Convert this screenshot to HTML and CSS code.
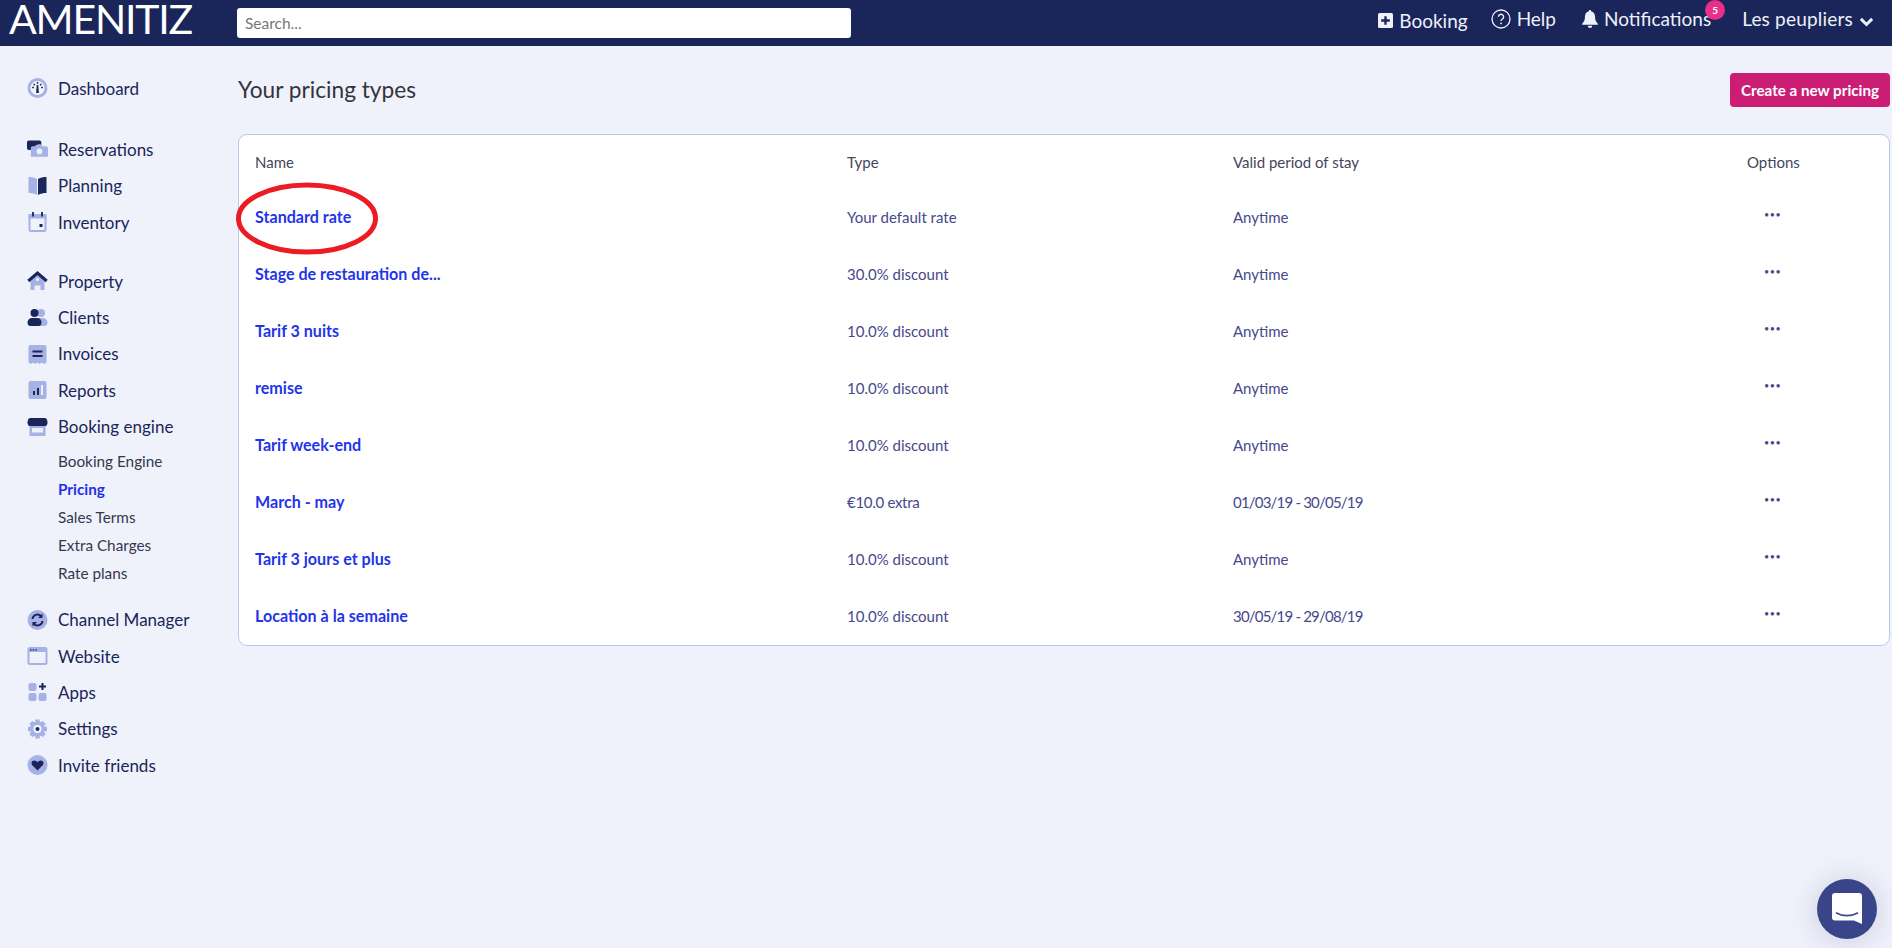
FILE: index.html
```html
<!DOCTYPE html>
<html lang="en">
<head>
<meta charset="utf-8">
<title>Your pricing types</title>
<link rel="stylesheet" href="styles.css">
</head>
<body>
<header class="topbar">
  <div class="logo">AMENITIZ</div>
  <input class="search" type="text" placeholder="Search...">
  <nav class="topnav">
    <a class="top-item booking"><svg class="ti" width="15" height="15" viewBox="0 0 14 14"><rect width="14" height="14" rx="1.5" fill="#eef1fa"/><path d="M7 3v8M3 7h8" stroke="#1a2559" stroke-width="2.2"/></svg>Booking</a>
    <a class="top-item help"><svg class="ti" width="20" height="20" viewBox="0 0 20 20"><circle cx="10" cy="10" r="9" fill="none" stroke="#eef1fa" stroke-width="1.3"/><path d="M7.4 7.8a2.600 2.600 0 1 1 4 2.200c-.9.6-1.400 1-1.400 2" fill="none" stroke="#eef1fa" stroke-width="1.4"/><circle cx="10" cy="14.400" r=".9" fill="#eef1fa"/></svg>Help</a>
    <a class="top-item notif"><svg class="ti" width="16" height="18" viewBox="0 0 14 16"><path d="M7 0c.7 0 1 .5 1 1 2.300.5 3.500 2.400 3.500 4.800 0 3.500.8 4.700 2.500 6.400V13H0v-.8c1.700-1.700 2.500-2.900 2.500-6.400C2.500 3.400 3.700 1.500 6 1c0-.5.300-1 1-1zM5 14h4a2 2 0 0 1-4 0z" fill="#eef1fa"/></svg>Notifications<span class="badge">5</span></a>
    <a class="top-item account">Les peupliers<svg class="chev" width="15" height="10" viewBox="0 0 12 8"><path d="M1.500 1.500 6 6l4.500-4.500" fill="none" stroke="#eef1fa" stroke-width="2.400"/></svg></a>
  </nav>
</header>

<div class="layout">
  <aside class="sidebar">
    <ul class="group first">
      <li class="item"><svg class="ic" viewBox="0 0 20 20"><circle cx="10" cy="10" r="10" fill="#a6b1e6"/><circle cx="10" cy="10" r="7" fill="#f4f6fc"/><path d="M10 4v1.800M4.600 9.500h1.800M13.600 9.500h1.800M6.200 6l1.200 1.200M13.800 6l-1.200 1.200" stroke="#1a2559" stroke-width="1.500"/><path d="M9.200 7h1.600l.6 8H8.600z" fill="#1a2559"/></svg>Dashboard</li>
    </ul>
    <ul class="group second">
      <li class="item"><svg class="ic" viewBox="0 0 22 20"><path d="M2 1h11a2 2 0 0 1 2 2v3H9v5H2a2 2 0 0 1-2-2V3a2 2 0 0 1 2-2z" fill="#1a2559"/><path d="M6 7h4l1-2h4l1 2h4a2 2 0 0 1 2 2v9H4V9a2 2 0 0 1 2-2z" fill="#a6b1e6"/><circle cx="13" cy="12.500" r="3" fill="#eef1fa"/></svg>Reservations</li>
      <li class="item"><svg class="ic" viewBox="0 0 20 20"><path d="M1 1c3 0 6 .5 8.500 2v16C7 17.500 4 17 1 17z" fill="#a6b1e6"/><path d="M19 1c-3 0-6 .5-8.500 2v16c2.500-1.500 5.500-2 8.500-2z" fill="#1a2559"/></svg>Planning</li>
      <li class="item"><svg class="ic" viewBox="0 0 20 20"><rect x="2" y="3" width="16" height="16" rx="1.500" fill="none" stroke="#a6b1e6" stroke-width="2"/><rect x="1" y="2" width="18" height="4.500" fill="#a6b1e6"/><path d="M5.500 0v4.500M14.500 0v4.500" stroke="#1a2559" stroke-width="1.800"/><rect x="12" y="12" width="3" height="3" fill="#1a2559"/></svg>Inventory</li>
    </ul>
    <ul class="group">
      <li class="item"><svg class="ic" viewBox="0 0 20 20"><path d="M3 7h14v12h-4v-4.500H7V19H3z" fill="#a6b1e6"/><path d="M10 3 3 9h14z" fill="#a6b1e6"/><circle cx="10" cy="8.500" r="1.500" fill="#eef1fa"/><path d="M.8 10 10 2l9.200 8" fill="none" stroke="#1a2559" stroke-width="3"/></svg>Property</li>
      <li class="item"><svg class="ic" viewBox="0 0 20 20"><circle cx="13.500" cy="5" r="4" fill="#a6b1e6"/><path d="M11 10h4c3 0 5 2 5 4.500 0 2-1 3.500-3 3.500h-8z" fill="#a6b1e6"/><circle cx="7" cy="5" r="4" fill="#1a2559"/><path d="M4.500 10h5c3 0 4.500 2 4.500 4.500 0 2-1 3.500-3 3.500H3c-2 0-3-1.500-3-3.500C0 12 2 10 4.500 10z" fill="#1a2559"/></svg>Clients</li>
      <li class="item"><svg class="ic" viewBox="0 0 20 20"><path d="M3 1h14a2 2 0 0 1 2 2v15.500l-2.500 1.500-2.200-1.500-2.200 1.500-2.100-1.500-2.200 1.500-2.200-1.500L3.500 20 1 18.500V3a2 2 0 0 1 2-2z" fill="#a6b1e6"/><path d="M5 7.500h10M5 12h10" stroke="#1a2559" stroke-width="2"/></svg>Invoices</li>
      <li class="item"><svg class="ic" viewBox="0 0 20 20"><rect x="1" y="1" width="18" height="18" rx="2" fill="#a6b1e6"/><path d="M5.500 11h2v4h-2zM9.500 8h2v7h-2z" fill="#1a2559"/><path d="M13.500 5h2v10h-2z" fill="#eef1fa"/></svg>Reports</li>
      <li class="item"><svg class="ic" viewBox="0 0 20 20"><path d="M2 8h16v11H2z" fill="#a6b1e6"/><rect x="4.500" y="11" width="11" height="4.500" fill="#eef1fa"/><path d="M3 1h14c2 0 3 2 3 4.500C20 7.500 19 9 18 9H2C1 9 0 7.500 0 5.500 0 3 1 1 3 1z" fill="#1a2559"/></svg>Booking engine</li>
    </ul>
    <ul class="subgroup">
      <li class="sub">Booking Engine</li>
      <li class="sub active">Pricing</li>
      <li class="sub">Sales Terms</li>
      <li class="sub">Extra Charges</li>
      <li class="sub">Rate plans</li>
    </ul>
    <ul class="group tight">
      <li class="item"><svg class="ic" viewBox="0 0 20 20"><circle cx="10" cy="10" r="10" fill="#a6b1e6"/><path d="M5 9a5 5 0 0 1 8.500-3M15 11a5 5 0 0 1-8.500 3" fill="none" stroke="#1a2559" stroke-width="2"/><path d="M15 3.500V8h-4.500zM5 16.500V12h4.500z" fill="#1a2559"/></svg>Channel Manager</li>
      <li class="item"><svg class="ic" viewBox="0 0 20 20"><rect x="1" y="2" width="18" height="16" rx="1.500" fill="none" stroke="#a6b1e6" stroke-width="2"/><rect x="1" y="2" width="18" height="4" fill="#a6b1e6"/><path d="M2.500 3.200h1.500v1.400H2.500zM5.200 3.200h1.500v1.400H5.200zM7.900 3.200h1.500v1.400H7.900z" fill="#1a2559"/></svg>Website</li>
      <li class="item"><svg class="ic" viewBox="0 0 20 20"><rect x="1" y="1" width="8" height="8" rx="2" fill="#a6b1e6"/><rect x="1" y="11" width="8" height="8" rx="2" fill="#a6b1e6"/><rect x="11" y="11" width="8" height="8" rx="2" fill="#a6b1e6"/><path d="M15 1v7M11.500 4.500h7" stroke="#1a2559" stroke-width="2"/></svg>Apps</li>
      <li class="item"><svg class="ic" viewBox="0 0 20 20"><path d="M10 10V.5M10 10l6.700-6.700M10 10h9.500M10 10l6.700 6.700M10 10v9.500M10 10l-6.700 6.700M10 10H.5M10 10 3.300 3.300" stroke="#a6b1e6" stroke-width="4.500"/><circle cx="10" cy="10" r="7.500" fill="#a6b1e6"/><circle cx="10" cy="10" r="4" fill="#f4f6fc"/><circle cx="10" cy="10" r="2" fill="#1a2559"/></svg>Settings</li>
      <li class="item"><svg class="ic" viewBox="0 0 20 20"><circle cx="10" cy="10" r="10" fill="#a6b1e6"/><path d="M10 15.500 4.800 10.200C3 8.300 4.300 5.500 6.800 5.500c1.300 0 2.500.7 3.200 1.800.7-1.100 1.900-1.800 3.200-1.800 2.500 0 3.800 2.800 2 4.700z" fill="#1a2559"/></svg>Invite friends</li>
    </ul>
  </aside>

  <main class="content">
    <div class="head">
      <h1 class="title">Your pricing types</h1>
      <a class="btn">Create a new pricing</a>
    </div>
    <section class="card">
      <table class="table">
        <thead>
          <tr><th class="c1">Name</th><th class="c2">Type</th><th class="c3">Valid period of stay</th><th class="c4">Options</th></tr>
        </thead>
        <tbody>
          <tr><td><a class="name">Standard rate</a></td><td>Your default rate</td><td>Anytime</td><td class="dots"><span>•••</span></td></tr>
          <tr><td><a class="name">Stage de restauration de...</a></td><td>30.0% discount</td><td>Anytime</td><td class="dots"><span>•••</span></td></tr>
          <tr><td><a class="name">Tarif 3 nuits</a></td><td>10.0% discount</td><td>Anytime</td><td class="dots"><span>•••</span></td></tr>
          <tr><td><a class="name">remise</a></td><td>10.0% discount</td><td>Anytime</td><td class="dots"><span>•••</span></td></tr>
          <tr><td><a class="name">Tarif week-end</a></td><td>10.0% discount</td><td>Anytime</td><td class="dots"><span>•••</span></td></tr>
          <tr><td><a class="name">March - may</a></td><td class="num">€10.0 extra</td><td class="num">01/03/19 - 30/05/19</td><td class="dots"><span>•••</span></td></tr>
          <tr><td><a class="name">Tarif 3 jours et plus</a></td><td>10.0% discount</td><td>Anytime</td><td class="dots"><span>•••</span></td></tr>
          <tr><td><a class="name">Location à la semaine</a></td><td>10.0% discount</td><td class="num">30/05/19 - 29/08/19</td><td class="dots"><span>•••</span></td></tr>
        </tbody>
      </table>
      <svg class="circle" width="145" height="75" viewBox="0 0 145 75"><ellipse cx="72" cy="37.500" rx="68.500" ry="33.500" fill="none" stroke="#ed1c24" stroke-width="5"/></svg>
    </section>
  </main>
</div>

<div class="chat"><svg width="30" height="32" viewBox="0 0 30 32"><path d="M3 0h24a3 3 0 0 1 3 3v28l-8-3.500H3a3 3 0 0 1-3-3V3a3 3 0 0 1 3-3z" fill="#fff"/><path d="M4.500 20c6 3.500 15 3.500 21 0" fill="none" stroke="#3a4589" stroke-width="1.600" stroke-linecap="round"/></svg></div>
</body>
</html>
```
FILE: styles.css
```css
* { box-sizing: border-box; }
html, body { margin: 0; padding: 0; }
body {
  width: 1892px;
  height: 948px;
  overflow: hidden;
  background: #eff2fb;
  font-family: "Lato", "Noto Sans", sans-serif;
  color: #1a2559;
}
ul { list-style: none; margin: 0; padding: 0; }

.topbar {
  height: 46px;
  background: #1a2559;
  display: flex;
  align-items: center;
  color: #eef1fa;
}
.logo {
  width: 237px;
  padding-left: 9px;
  font-size: 41px;
  font-weight: 400;
  line-height: 38px;
  height: 46px;
  letter-spacing: -1.200px;
  color: #fff;
  font-family: "Lato", sans-serif;
}
.search {
  width: 614px;
  height: 30px;
  border: 0;
  border-radius: 3px;
  background: #fff;
  padding: 0 8px;
  font: 15.500px "Lato", sans-serif;
}
.search::placeholder { color: #777; opacity: 1; }
.topnav {
  margin-left: auto;
  display: flex;
  align-items: center;
  height: 46px;
  padding: 0 18px 9px 0;
  font-size: 19px;
}
.top-item { display: flex; align-items: center; position: relative; white-space: nowrap; }
.booking { margin-right: 23px; padding-top: 3px; }
.help { margin-right: 26px; }
.notif { margin-right: 31px; }
.account { letter-spacing: 0.200px; }
.ti { margin-right: 6px; flex: none; }
.chev { margin-left: 6px; margin-top: 6px; }
.badge {
  position: absolute;
  right: -14px;
  top: -7px;
  width: 20px;
  height: 20px;
  border-radius: 50%;
  background: #e8308a;
  color: #fff;
  font-size: 10px;
  font-weight: 700;
  display: flex;
  align-items: center;
  justify-content: center;
}

.layout { display: flex; }
.sidebar { width: 238px; flex: none; padding: 24px 0 0 27px; }
.group { margin-bottom: 24px; }
.group.first { margin-bottom: 25px; }
.group.second { margin-bottom: 23px; }
.group.tight { margin-bottom: 0; }
.item {
  height: 36.300px;
  display: flex;
  align-items: center;
  font-size: 17px;
  color: #1a2559;
  white-space: nowrap;
}
.ic { width: 21px; height: 20px; margin-right: 10px; flex: none; }
.group:has(+ .subgroup) { margin-bottom: 2px; }
.subgroup { padding-left: 31px; margin-bottom: 15px; }
.sub { height: 28px; display: flex; align-items: center; font-size: 15.300px; color: #33384f; }
.sub.active { color: #1f2ff0; font-weight: 700; }

.content { flex: 1; min-width: 0; padding-right: 2px; }
.head {
  height: 88px;
  display: flex;
  justify-content: space-between;
  align-items: flex-start;
}
.title {
  margin: 30px 0 0;
  font-size: 22.700px;
  line-height: 28px;
  font-weight: 400;
  color: #34343c;
}
.btn {
  margin-top: 27px;
  width: 160px;
  height: 34px;
  background: #cb1d74;
  border-radius: 4px;
  color: #fff;
  font-size: 15.200px;
  font-weight: 700;
  display: flex;
  align-items: center;
  justify-content: center;
  white-space: nowrap;
}
.card {
  position: relative;
  height: 512px;
  background: #fff;
  border: 1px solid #bcc7ec;
  border-radius: 9px;
}
.circle { position: absolute; left: -4px; top: 46px; }
.table { width: 100%; border-collapse: collapse; table-layout: fixed; font-size: 15px; }
.table th {
  height: 54px;
  padding: 0;
  text-align: left;
  font-weight: 400;
  color: #44465a;
}
.table th.c1 { width: 608px; padding-left: 16px; }
.table th.c2 { width: 386px; }
.table th.c3 { width: 514px; }
.table td { height: 57px; padding: 0 0 2px; color: #46488c; }
.table td:first-child { padding-left: 16px; }
.table td.num { letter-spacing: -0.800px; }
.table td.num:nth-child(2) { letter-spacing: -0.300px; }
.name { color: #1f35e8; font-weight: 700; font-size: 16.100px; }
.dots { padding-left: 17px !important; color: #1a2559; font-size: 9px; letter-spacing: 0.500px; }
.dots span { position: relative; top: -2px; }

.chat {
  position: fixed;
  left: 1817px;
  top: 879px;
  width: 60px;
  height: 60px;
  border-radius: 50%;
  background: #3a4589;
  box-shadow: 0 2px 30px rgba(26, 37, 89, 0.18);
  display: flex;
  align-items: center;
  justify-content: center;
}
```
